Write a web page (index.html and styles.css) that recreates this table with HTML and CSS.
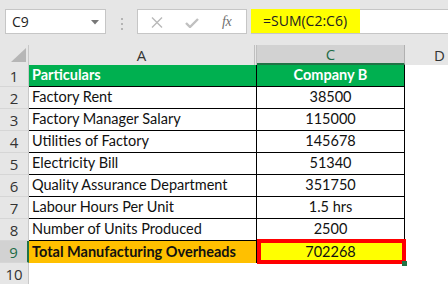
FILE: index.html
```html
<!DOCTYPE html>
<html>
<head>
<meta charset="utf-8">
<link rel="stylesheet" href="styles.css">
</head>
<body>
<div class="toolbar">
  <div class="namebox">
    <span class="nb-text">C9</span>
    <svg class="caret" width="8" height="5" viewBox="0 0 8 5"><path d="M0 0H8L4 4.5Z" fill="#777"/></svg>
  </div>
  <svg class="dots" width="3" height="12" viewBox="0 0 3 12"><rect x="0" y="0" width="2" height="2" fill="#b4b4b4"/><rect x="0" y="5" width="2" height="2" fill="#b4b4b4"/><rect x="0" y="10" width="2" height="2" fill="#b4b4b4"/></svg>
  <div class="fbtns">
    <svg class="ico-x" width="12" height="11" viewBox="0 0 12 11"><path d="M1 0.5L11 10.5M11 0.5L1 10.5" stroke="#b9b9b9" stroke-width="1.4" fill="none"/></svg>
    <svg class="ico-ok" width="14" height="10" viewBox="0 0 14 10"><path d="M1 5L5 9L13 1" stroke="#c0c0c0" stroke-width="2.4" fill="none"/></svg>
    <span class="fx">fx</span>
  </div>
  <div class="formula"><span class="hl">=SUM(C2:C6)</span></div>
</div>
<div class="sheet">
  <div class="corner"><svg width="15" height="14" viewBox="0 0 15 14"><path d="M15 0V14H0Z" fill="#b6b6b6"/></svg></div>
  <div class="ch cha">A</div>
  <div class="ch chc">C</div>
  <div class="ch chd">D</div>

  <div class="rh">1</div><div class="c a hdr">Particulars</div><div class="c n hdr">Company B</div><div class="e"></div>
  <div class="rh">2</div><div class="c a">Factory Rent</div><div class="c n">38500</div><div class="e"></div>
  <div class="rh">3</div><div class="c a">Factory Manager Salary</div><div class="c n">115000</div><div class="e"></div>
  <div class="rh">4</div><div class="c a">Utilities of Factory</div><div class="c n">145678</div><div class="e"></div>
  <div class="rh">5</div><div class="c a">Electricity Bill</div><div class="c n">51340</div><div class="e"></div>
  <div class="rh">6</div><div class="c a">Quality Assurance Department</div><div class="c n">351750</div><div class="e"></div>
  <div class="rh">7</div><div class="c a">Labour Hours Per Unit</div><div class="c n">1.5 hrs</div><div class="e"></div>
  <div class="rh">8</div><div class="c a">Number of Units Produced</div><div class="c n">2500</div><div class="e"></div>
  <div class="rh rhsel">9</div><div class="c a tot">Total Manufacturing Overheads</div><div class="c n sel">702268</div><div class="e"></div>
  <div class="rh">10</div><div class="e"></div><div class="e"></div><div class="e"></div>
</div>
</body>
</html>
```
FILE: styles.css
```css
html, body { margin: 0; padding: 0; }
body {
  width: 448px;
  height: 284px;
  overflow: hidden;
  background: #fff;
  font-family: "Noto Sans", "Open Sans", sans-serif;
}
.toolbar {
  height: 45px;
  box-sizing: border-box;
  background: #e6e6e6;
  display: flex;
  align-items: flex-start;
  padding-top: 9px;
}
.namebox {
  margin-left: 5px;
  width: 101px;
  height: 25px;
  box-sizing: border-box;
  background: #fff;
  border: 1px solid #c6c6c6;
  display: flex;
  align-items: center;
  justify-content: space-between;
  padding: 0 6px 0 6px;
}
.nb-text { font-size: 14px; color: #222; font-family: "Open Sans", sans-serif; }
.caret { margin-top: 1px; }
.dots { margin: 9px 0 0 15px; }
.fbtns {
  margin-left: 13px;
  width: 110px;
  height: 25px;
  box-sizing: border-box;
  background: #fff;
  border: 1px solid #c6c6c6;
  display: flex;
  align-items: center;
  padding-left: 13px;
}
.ico-x { margin-top: 1px; }
.ico-ok { margin-left: 22px; margin-top: 2px; }
.fx {
  margin-left: 23px;
  font-family: "Liberation Serif", serif;
  font-style: italic;
  font-size: 14px;
  color: #6f6f6f;
  letter-spacing: -0.5px;
}
.formula {
  margin-left: 4px;
  flex: 1;
  height: 25px;
  box-sizing: border-box;
  background: #fff;
  border-top: 1px solid #c6c6c6;
  border-bottom: 1px solid #c6c6c6;
  display: flex;
}
.hl {
  background: #ffff00;
  width: 109px;
  margin-top: -1px;
  box-sizing: border-box;
  padding-left: 12px;
  font-size: 14px;
  line-height: 24px;
  color: #222;
  font-family: "Open Sans", sans-serif;
}
.sheet {
  display: grid;
  grid-template-columns: 29px 228px 148px 1fr;
  grid-template-rows: 20px repeat(10, 22px);
}
.corner {
  background: #e6e6e6;
  border-right: 1px solid #c8c8c8;
  box-sizing: border-box;
  display: flex;
  align-items: flex-end;
  justify-content: flex-end;
  padding: 0 2px 3px 0;
}
.corner svg { display: block; }
.ch {
  background: #e6e6e6;
  box-sizing: border-box;
  border-right: 1px solid #c8c8c8;
  display: flex;
  align-items: center;
  justify-content: center;
  font-size: 15px;
  color: #333;
  font-family: "Open Sans", sans-serif;
}
.cha { border-right: 3px double #bfbfbf; }
.chc {
  background: #d2d2d2;
  color: #1f6b46;
  border-bottom: 2px solid #217346;
  border-right: 1px solid #b0b0b0;
}
.chd {
  justify-content: flex-start;
  padding-left: 29px;
  border-right: none;
}
.rh {
  background: #e6e6e6;
  box-sizing: border-box;
  border-right: 1px solid #c8c8c8;
  border-bottom: 1px solid #d6d6d6;
  display: flex;
  align-items: center;
  justify-content: center;
  font-size: 15px;
  color: #333;
  font-family: "Open Sans", sans-serif;
}
.rhsel {
  background: #d2d2d2;
  color: #1f6b46;
  border-right: 2px solid #217346;
}
.c {
  box-sizing: border-box;
  border-right: 1px solid #000;
  border-bottom: 1px solid #000;
  display: flex;
  align-items: flex-end;
  padding: 0 3px 2px 3px;
  font-family: "Lato", sans-serif;
  font-size: 14.5px;
  line-height: 18px;
  color: #111;
  white-space: nowrap;
  overflow: hidden;
}
.n { justify-content: center; }
.hdr { background: #00b050; color: #fff; font-weight: bold; }
.tot { background: #ffc000; font-weight: bold; border-bottom: none; }
.sel {
  background: #ffff00;
  position: relative;
  overflow: visible;
  border-bottom: none;
}
.sel::after {
  content: "";
  position: absolute;
  left: 0;
  top: -2px;
  right: -2px;
  bottom: -1px;
  border: 4px solid #ff0000;
}
.sel::before {
  content: "";
  position: absolute;
  right: -3px;
  bottom: -3px;
  width: 5px;
  height: 5px;
  background: #217346;
  z-index: 2;
}
.e { background: #fff; }
```
